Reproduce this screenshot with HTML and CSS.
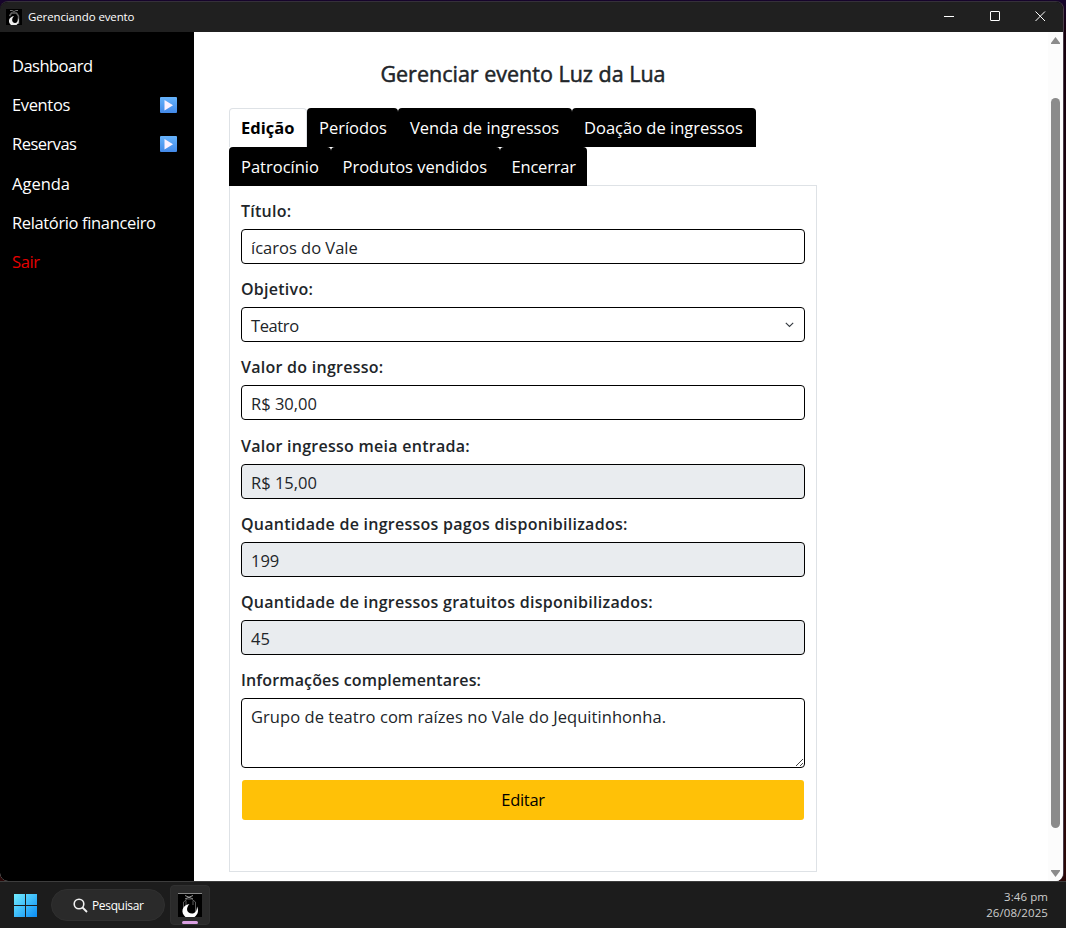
FILE: index.html
```html
<!DOCTYPE html>
<html lang="pt-BR">
<head>
<meta charset="utf-8">
<title>Gerenciando evento</title>
<link rel="stylesheet" href="styles.css">
</head>
<body>
<svg class="defs" width="0" height="0">
  <defs>
    <linearGradient id="play" x1="0" y1="0" x2="0" y2="1"><stop offset="0" stop-color="#66b3fb"/><stop offset="1" stop-color="#4389e8"/></linearGradient>
    <linearGradient id="win" x1="0" y1="0" x2="1" y2="1"><stop offset="0" stop-color="#72edff"/><stop offset="1" stop-color="#0a8cf5"/></linearGradient>
    <symbol id="playicon" viewBox="0 0 17 16"><rect width="17" height="16" rx="1" fill="url(#play)"/><path d="M4.5 3v10.5L13 8.2z" fill="#fbf1ff"/></symbol>
    <symbol id="moon" viewBox="0 0 24 24">
      <rect width="24" height="24" fill="#000"/>
      <path d="M0 .5h24" stroke="#888"/>
      <path d="M7 2.500l8 3.500M15 2.500L7 6" fill="none" stroke="#999" stroke-width="1"/>
      <path d="M5.500 20V9l4-3h4l4 3v11M8 8v5M15 8v4" fill="none" stroke="#5c5c5c" stroke-width="1"/>
      <path d="M11.500 11C3.500 12.500 2.500 20 7.500 24h9c3.500-2.500 4.500-6.500 2.500-10.500 0 4.500-2 7-5 7-5.500 0-6.500-5.500-2.500-9.500z" fill="#fff"/>
    </symbol>
  </defs>
</svg>
<div class="window">
  <header class="titlebar">
    <svg class="appicon" width="16" height="16" viewBox="0 0 16 16"><rect width="16" height="16" fill="#000"/><path d="M4 1.500h2l2 1 2-1h2" fill="none" stroke="#777"/><path d="M3.500 7l2-3h5l2 3v8" fill="none" stroke="#666" stroke-width="1.500"/><path d="M8 7C2.500 8 1.500 13 5 16h5.500c2.500-2 3-4 1.500-7 0 3.500-1 5-3 5-3 0-4-4-1-7z" fill="#eee"/></svg>
    <span class="apptitle">Gerenciando evento</span>
    <div class="controls">
      <svg width="11" height="11"><path d="M0 5.500h10" stroke="#fff"/></svg>
      <svg width="11" height="11"><rect x=".5" y=".5" width="9" height="9" rx=".5" fill="none" stroke="#fff"/></svg>
      <svg width="11" height="11"><path d="M.5.5l9.500 9.500M10 .5L.5 10" stroke="#fff"/></svg>
    </div>
  </header>
  <div class="body">
    <nav class="sidebar">
      <a><span class="s1">Dashboard</span></a>
      <a><span class="s2">Eventos</span><svg width="17" height="16"><use href="#playicon"/></svg></a>
      <a><span class="s3">Reservas</span><svg width="17" height="16"><use href="#playicon"/></svg></a>
      <a><span class="s4">Agenda</span></a>
      <a><span class="s5">Relatório financeiro</span></a>
      <a class="exit"><span class="s6">Sair</span></a>
    </nav>
    <main class="main">
      <h1 class="heading">Gerenciar evento Luz da Lua</h1>
      <div class="tabs">
        <div class="tabrow"><a class="tab active t1">Edição</a><a class="tab t2">Períodos</a><a class="tab t3">Venda de ingressos</a><a class="tab t4">Doação de ingressos</a></div>
        <div class="tabrow"><a class="tab t5">Patrocínio</a><a class="tab t6">Produtos vendidos</a><a class="tab t7">Encerrar</a></div>
      </div>
      <form class="panel">
        <div class="field"><label>Título:</label><div class="input"><span>ícaros do Vale</span></div></div>
        <div class="field"><label>Objetivo:</label><div class="input select"><span class="tight">Teatro</span><svg width="9" height="6"><path d="M.8.8l3.700 3.700L8.200.8" fill="none" stroke="#343a40" stroke-width="1.100"/></svg></div></div>
        <div class="field"><label>Valor do ingresso:</label><div class="input"><span>R$ 30,00</span></div></div>
        <div class="field"><label>Valor ingresso meia entrada:</label><div class="input disabled"><span>R$ 15,00</span></div></div>
        <div class="field"><label>Quantidade de ingressos pagos disponibilizados:</label><div class="input disabled"><span>199</span></div></div>
        <div class="field"><label>Quantidade de ingressos gratuitos disponibilizados:</label><div class="input disabled"><span>45</span></div></div>
        <div class="field last"><label class="narrow">Informações complementares:</label><div class="input area"><span>Grupo de teatro com raízes no Vale do Jequitinhonha.</span><svg width="9" height="9"><path d="M1 8l7-7M5 8l3-3" stroke="#444" fill="none"/></svg></div></div>
        <div class="button">Editar</div>
      </form>
    </main>
    <div class="scrollbar">
      <svg width="9" height="8"><path d="M4.500 0L9 6v1H0V6z" fill="#8b8b8b"/></svg>
      <div class="thumb"></div>
      <svg width="9" height="8"><path d="M0 0h9v1L4.500 7 0 1z" fill="#8b8b8b"/></svg>
    </div>
  </div>
</div>
<footer class="taskbar">
  <svg class="start" width="23" height="23"><path d="M0 0h11v11H0zM12 0h11v11H12zM0 12h11v11H0zM12 12h11v11H12z" fill="url(#win)"/></svg>
  <div class="search"><svg width="15" height="15"><circle cx="6" cy="6" r="4.800" fill="none" stroke="#f2f2f2" stroke-width="1.600"/><path d="M9.500 9.500l4.500 4.500" stroke="#f2f2f2" stroke-width="1.800"/></svg><span>Pesquisar</span></div>
  <div class="task"><svg width="24" height="24"><use href="#moon"/></svg><i></i></div>
  <div class="clock"><span class="time">3:46 pm</span><span class="date">26/08/2025</span></div>
</footer>
</body>
</html>
```
FILE: styles.css
```css
* { box-sizing: border-box; }
body { margin: 0; width: 1066px; height: 928px; overflow: hidden; background: linear-gradient(#16042c, #16000e 30px, #2a0808 870px); font: 16.5px "Open Sans", "Noto Sans", sans-serif; color: #212529; white-space: nowrap; }
svg { display: block; flex: none; }
.defs { position: absolute; }
.window { width: 1064px; height: 880px; margin-top: 1px; border-top: 1px solid #35303a; border-right: 1px solid #4a3c48; border-radius: 8px; overflow: hidden; background: #000; }
.titlebar { height: 30px; background: #202020; display: flex; align-items: center; padding-left: 6px; color: #fff; font-size: 11.5px; }
.apptitle { margin: -2px 0 0 6px; letter-spacing: -.12px; }
.controls { margin: -1px 17px 0 auto; display: flex; gap: 34.500px; }
.body { height: 849px; display: flex; background: #fff; }
.sidebar { width: 194px; background: #000; color: #fff; padding: 14.500px 17px 0 12px; }
.sidebar a { height: 39.200px; display: flex; align-items: center; justify-content: space-between; }
.sidebar span { margin-top: -1px; letter-spacing: -.36px; }
.sidebar .s1, .sidebar .s3 { letter-spacing: -.52px; }
.sidebar .s4 { letter-spacing: 0; }
.sidebar .exit { color: #e60000; }
.main { width: 588px; margin-left: 35px; padding-top: 27px; }
.heading { margin: 0; height: 49px; line-height: 30px; font-size: 21.500px; font-weight: 400; -webkit-text-stroke: .5px #212529; text-align: center; }
.tabs { height: 78px; border-bottom: 1px solid #dee2e6; }
.tabrow { display: flex; height: 39px; }
.tab { height: 39px; line-height: 39px; padding-left: 12px; background: #000; color: #fff; border-radius: 4px 4px 0 0; }
.tab.active { background: #fff; color: #000; font-weight: 700; border: 1px solid #dee2e6; border-bottom: 0; line-height: 38px; padding-left: 11px; }
.t1 { width: 78px; } .t2 { width: 91px; } .t3 { width: 174px; } .t4 { width: 184px; }
.t5 { width: 101.500px; } .t6 { width: 169px; } .t7 { width: 87.500px; letter-spacing: -.2px; }
.panel { height: 686px; border: 1px solid #dee2e6; border-top: 0; padding: 14px 11px 0; }
.field { height: 78.200px; }
.field label { display: block; height: 29px; line-height: 23px; font-weight: 600; font-size: 16px; letter-spacing: .26px; }
.field .narrow { letter-spacing: .15px; }
.input { height: 35px; border: 1px solid #000; border-radius: 4px; padding: 2px 10px 0 9px; display: flex; align-items: center; justify-content: space-between; }
.tight { letter-spacing: -.4px; }
.select svg { margin-top: -2px; }
.disabled { background: #e9ecef; }
.last { height: 111px; }
.area { height: 70px; align-items: flex-start; padding: 6px 0 0 9px; line-height: 24px; letter-spacing: .06px; }
.area svg { align-self: flex-end; }
.button { height: 40px; margin: 0 1px; border-radius: 3px; background: #ffc107; color: #000; text-align: center; line-height: 40px; letter-spacing: -.3px; }
.scrollbar { width: 15px; margin-left: auto; background: #fcfcfc; display: flex; flex-direction: column; align-items: center; padding: 5px 0 3px; }
.thumb { width: 9px; height: 730px; margin: 53px 0 auto; border-radius: 5px; background: #8b8b8b; }
.taskbar { height: 47px; background: #1c1c1c; border-top: 1px solid #3d3d3d; display: flex; align-items: center; padding-left: 14px; color: #fff; font-size: 12px; }
.search { width: 114px; height: 32px; margin-left: 14px; border-radius: 16px; background: #2a2a2a; border: 1px solid #303030; display: flex; align-items: center; padding-left: 21px; }
.search span { margin-left: 4px; letter-spacing: -.35px; }
.task { width: 40px; height: 40px; margin-left: 5px; border: 1px solid #303030; border-radius: 4px; background: #2a2a2a; display: flex; flex-direction: column; align-items: center; padding-top: 7px; }
.task i { width: 16px; height: 3px; margin-top: 4px; border-radius: 2px; background: #d9a0e2; }
.clock { margin-left: auto; margin-right: 18px; color: #cecece; font-size: 11.500px; line-height: 16px; display: flex; flex-direction: column; align-items: flex-end; letter-spacing: .08px; }
```
